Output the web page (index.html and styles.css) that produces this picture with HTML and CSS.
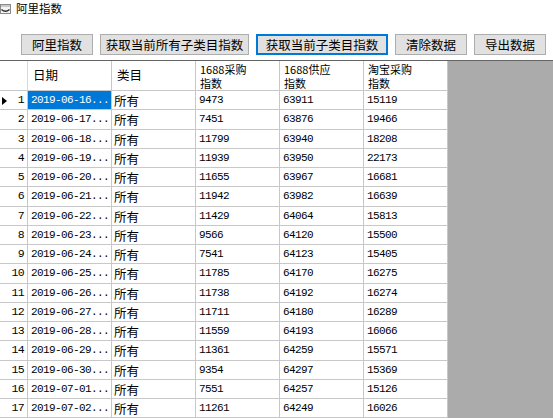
FILE: index.html
```html
<!DOCTYPE html>
<html lang="zh">
<head>
<meta charset="utf-8">
<title>阿里指数</title>
<link rel="stylesheet" href="styles.css">
</head>
<body>
<div class="titlebar">
  <svg class="appicon" width="11" height="10" viewBox="0 0 11 10"><rect x="0.5" y="0.5" width="10" height="9" fill="#f4f4f4" stroke="#8a8a8a"/><rect x="1" y="1" width="9" height="2" fill="#c9c9c9"/><path d="M1.5 5.5 Q5.5 9 9.5 5.5" fill="none" stroke="#2b2b2b" stroke-width="1.4"/></svg>
  <span class="title">阿里指数</span>
</div>
<div class="toolbar">
  <button class="btn b1">阿里指数</button>
  <button class="btn b2">获取当前所有子类目指数</button>
  <button class="btn b3 focused">获取当前子类目指数</button>
  <button class="btn b4">清除数据</button>
  <button class="btn b5">导出数据</button>
</div>
<div class="gridview">
  <div class="table">
    <div class="cell corner"></div>
    <div class="cell ch single">日期</div>
    <div class="cell ch single">类目</div>
    <div class="cell ch"><span class="hl">1688采购</span><span class="hl">指数</span></div>
    <div class="cell ch"><span class="hl">1688供应</span><span class="hl">指数</span></div>
    <div class="cell ch"><span class="hl">淘宝采购</span><span class="hl">指数</span></div>

    <div class="cell rh current"><span class="arrow"></span>1</div><div class="cell d sel">2019-06-16...</div><div class="cell c">所有</div><div class="cell d">9473</div><div class="cell d">63911</div><div class="cell d">15119</div>
    <div class="cell rh">2</div><div class="cell d">2019-06-17...</div><div class="cell c">所有</div><div class="cell d">7451</div><div class="cell d">63876</div><div class="cell d">19466</div>
    <div class="cell rh">3</div><div class="cell d">2019-06-18...</div><div class="cell c">所有</div><div class="cell d">11799</div><div class="cell d">63940</div><div class="cell d">18208</div>
    <div class="cell rh">4</div><div class="cell d">2019-06-19...</div><div class="cell c">所有</div><div class="cell d">11939</div><div class="cell d">63950</div><div class="cell d">22173</div>
    <div class="cell rh">5</div><div class="cell d">2019-06-20...</div><div class="cell c">所有</div><div class="cell d">11655</div><div class="cell d">63967</div><div class="cell d">16681</div>
    <div class="cell rh">6</div><div class="cell d">2019-06-21...</div><div class="cell c">所有</div><div class="cell d">11942</div><div class="cell d">63982</div><div class="cell d">16639</div>
    <div class="cell rh">7</div><div class="cell d">2019-06-22...</div><div class="cell c">所有</div><div class="cell d">11429</div><div class="cell d">64064</div><div class="cell d">15813</div>
    <div class="cell rh">8</div><div class="cell d">2019-06-23...</div><div class="cell c">所有</div><div class="cell d">9566</div><div class="cell d">64120</div><div class="cell d">15500</div>
    <div class="cell rh">9</div><div class="cell d">2019-06-24...</div><div class="cell c">所有</div><div class="cell d">7541</div><div class="cell d">64123</div><div class="cell d">15405</div>
    <div class="cell rh">10</div><div class="cell d">2019-06-25...</div><div class="cell c">所有</div><div class="cell d">11785</div><div class="cell d">64170</div><div class="cell d">16275</div>
    <div class="cell rh">11</div><div class="cell d">2019-06-26...</div><div class="cell c">所有</div><div class="cell d">11738</div><div class="cell d">64192</div><div class="cell d">16274</div>
    <div class="cell rh">12</div><div class="cell d">2019-06-27...</div><div class="cell c">所有</div><div class="cell d">11711</div><div class="cell d">64180</div><div class="cell d">16289</div>
    <div class="cell rh">13</div><div class="cell d">2019-06-28...</div><div class="cell c">所有</div><div class="cell d">11559</div><div class="cell d">64193</div><div class="cell d">16066</div>
    <div class="cell rh">14</div><div class="cell d">2019-06-29...</div><div class="cell c">所有</div><div class="cell d">11361</div><div class="cell d">64259</div><div class="cell d">15571</div>
    <div class="cell rh">15</div><div class="cell d">2019-06-30...</div><div class="cell c">所有</div><div class="cell d">9354</div><div class="cell d">64297</div><div class="cell d">15369</div>
    <div class="cell rh">16</div><div class="cell d">2019-07-01...</div><div class="cell c">所有</div><div class="cell d">7551</div><div class="cell d">64257</div><div class="cell d">15126</div>
    <div class="cell rh">17</div><div class="cell d">2019-07-02...</div><div class="cell c">所有</div><div class="cell d">11261</div><div class="cell d">64249</div><div class="cell d">16026</div>
  </div>
</div>
</body>
</html>
```

FILE: styles.css
```css
html, body {
  margin: 0;
  padding: 0;
  background: #ffffff;
  overflow: hidden;
}
body {
  width: 553px;
  height: 418px;
  font-family: "Noto Sans CJK SC", "Noto Sans", sans-serif;
  color: #000;
}
.titlebar {
  height: 16px;
  display: flex;
  align-items: center;
  gap: 5px;
}
.appicon {
  display: block;
  margin-top: 1px;
}
.title {
  font-size: 11.5px;
  line-height: 14px;
  color: #000;
}
.toolbar {
  display: flex;
  gap: 7px;
  margin-top: 18px;
  margin-bottom: 5px;
  padding-left: 21px;
  height: 21px;
}
.btn {
  height: 21px;
  margin: 0;
  padding: 0;
  box-sizing: border-box;
  border: 1px solid #adadad;
  background: #e1e1e1;
  font-family: "Noto Sans CJK SC", "Noto Sans", sans-serif;
  font-size: 12.5px;
  line-height: 18px;
  color: #000;
  text-align: center;
}
.b1 { width: 72px; }
.b2 { width: 149px; }
.b3 { width: 132px; }
.b4 { width: 72px; }
.b5 { width: 72px; }
.focused {
  border-color: #0078d7;
  box-shadow: inset 0 0 0 1px #0078d7;
}
.gridview {
  display: flex;
  background: #ababab;
  border-top: 1px solid #646464;
  height: 357px;
  overflow: hidden;
}
.table {
  display: grid;
  grid-template-columns: 28px repeat(5, 84px);
  grid-template-rows: 30px;
  grid-auto-rows: 19.25px;
  background: #ffffff;
  width: 448px;
  align-content: start;
}
.cell {
  box-sizing: border-box;
  border-right: 1px solid #c8c8c8;
  border-bottom: 1px solid #c8c8c8;
  overflow: hidden;
  white-space: nowrap;
}
.corner {
  border-right-color: #d8d8d8;
}
.ch {
  display: flex;
  flex-direction: column;
  font-size: 11px;
  padding: 1px 0 0 4px;
  color: #000;
}
.hl {
  display: block;
  height: 14px;
  line-height: 14px;
}
.ch.single {
  display: block;
  font-size: 12.5px;
  line-height: 28px;
  padding: 0 0 0 5px;
}
.rh {
  position: relative;
  font-family: "Liberation Mono", monospace;
  font-size: 11.5px;
  letter-spacing: -0.6px;
  line-height: 18px;
  text-align: right;
  padding-right: 3px;
  color: #000;
}
.arrow {
  position: absolute;
  left: 2px;
  top: 6px;
  width: 0;
  height: 0;
  border-top: 4px solid transparent;
  border-bottom: 4px solid transparent;
  border-left: 5px solid #000;
}
.d {
  font-family: "Liberation Mono", monospace;
  font-size: 11px;
  letter-spacing: -0.6px;
  line-height: 19px;
  padding-left: 3px;
  color: #000;
}
.c {
  font-size: 12.5px;
  line-height: 19px;
  padding-left: 2px;
}
.sel {
  background: #0078d7;
  color: #ffffff;
}
```
